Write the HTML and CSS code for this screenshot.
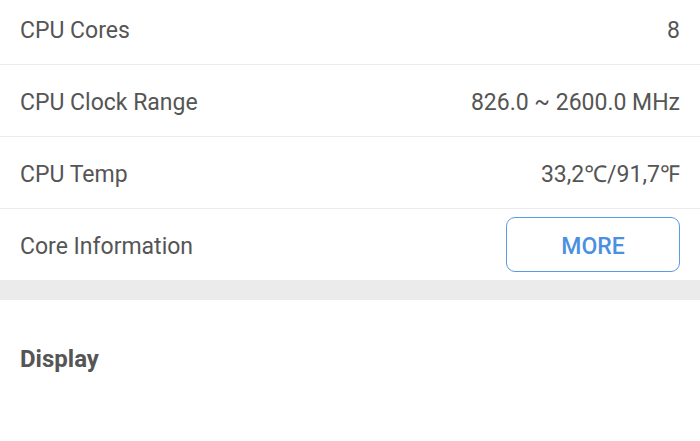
FILE: index.html
```html
<!DOCTYPE html>
<html>
<head>
<meta charset="utf-8">
<link rel="stylesheet" href="styles.css">
</head>
<body>
<div class="page">
  <section class="card">
    <div class="row"><span class="label">CPU Cores</span><span class="value">8</span></div>
    <div class="row"><span class="label">CPU Clock Range</span><span class="value">826.0 ~ 2600.0 MHz</span></div>
    <div class="row"><span class="label">CPU Temp</span><span class="value">33,2℃/91,7℉</span></div>
    <div class="row last"><span class="label shifted">Core Information</span><button class="more">MORE</button></div>
  </section>
  <div class="gap"></div>
  <section class="card">
    <h2 class="title">Display</h2>
    <div class="row"><span class="label">Renderer</span><span class="value">Mali-G71</span></div>
  </section>
</div>
</body>
</html>
```
FILE: styles.css
```css
html, body {
  margin: 0;
  padding: 0;
  background: #ffffff;
  overflow: hidden;
}
body {
  font-family: Roboto, "Noto Sans", sans-serif;
  color: #555555;
}
.page {
  margin-top: -7px;
}
.card {
  background: #ffffff;
}
.row {
  display: flex;
  justify-content: space-between;
  align-items: center;
  height: 72px;
  box-sizing: border-box;
  padding: 4px 20px 0 20px;
  border-bottom: 1px solid #ececec;
  font-size: 23px;
}
.row.last {
  height: 71px;
  border-bottom: none;
  padding-top: 0;
}
.label, .value {
  line-height: 28px;
}
.label.shifted {
  padding-top: 4px;
}
.more {
  width: 174px;
  height: 55px;
  border: 1px solid #5d9be0;
  border-radius: 9px;
  background: #ffffff;
  color: #4a90e2;
  font-family: Roboto, sans-serif;
  font-size: 23px;
  font-weight: 500;
  padding: 3px 0 0 0;
}
.gap {
  height: 20px;
  background: #ebebeb;
}
.title {
  margin: 0;
  padding: 45px 20px 41px 20px;
  font-size: 24px;
  line-height: 28px;
  font-weight: 700;
  color: #555555;
}
```
